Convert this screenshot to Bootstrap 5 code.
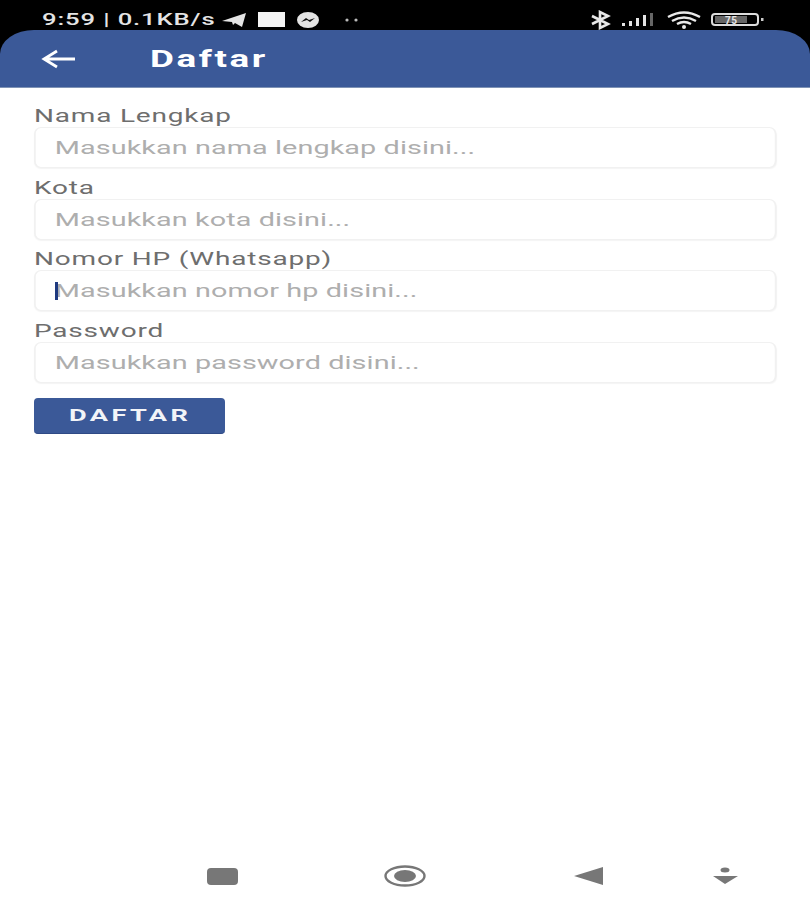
<!DOCTYPE html>
<html lang="id">
<head>
    <meta charset="UTF-8">
    <meta name="viewport" content="width=device-width, initial-scale=1.0">
    <title>Daftar</title>
    <link href="https://cdn.jsdelivr.net/npm/bootstrap@5.3.0/dist/css/bootstrap.min.css" rel="stylesheet">
    <style>
        body {
            background: #000;
            font-family: Roboto, "Liberation Sans", sans-serif;
            overflow: hidden;
        }

        .phone-screen {
            height: 900px;
            width: 810px;
        }

        /* the whole screenshot is stretched sideways, so the text is too */
        .wide-text {
            display: inline-block;
            transform: scaleX(1.6);
            transform-origin: left center;
        }

        .status-strip {
            height: 30px;
            padding: 9px 45px 0 42px;
            color: #e4e4e4;
            font-size: 16px;
            font-weight: 500;
            letter-spacing: 0.55px;
        }

        .status-time {
            width: 177px;
            white-space: nowrap;
        }

        .status-left svg, .status-right svg {
            display: block;
        }

        .app-header {
            height: 58px;
            background: #3b5998;
            border-radius: 34px 34px 0 0 / 24px 24px 0 0;
            border-bottom: 1px solid #7f93b5;
            padding-left: 41px;
            color: #fff;
        }

        .app-title {
            font-size: 23px;
            font-weight: 700;
            letter-spacing: 1.6px;
            margin-left: 74px;
            padding-top: 4px;
        }

        .form-area {
            background: #fff;
            padding: 16px 33px 0 34px;
        }

        .field-label {
            display: block;
            color: #6e6e6e;
            font-size: 17.5px;
            line-height: 22px;
            letter-spacing: 0.5px;
            padding-top: 1px;
            margin: 0;
        }

        .field-wrap {
            position: relative;
            margin-bottom: 7.67px;
        }

        .form-control.field-input {
            width: 62.5%;
            height: 41px;
            border: 1px solid #f1f1f1;
            border-width: 1px 0.625px;
            border-radius: 4.4px / 7px;
            padding: 0 12px;
            font-size: 18px;
            letter-spacing: 0.05px;
            box-shadow: 0 1px 1px #f4f4f4;
            transform: scaleX(1.6);
            transform-origin: left center;
        }

        .field-input::placeholder {
            color: #aeaeae;
            opacity: 1;
        }

        .text-cursor {
            position: absolute;
            left: 21px;
            top: 12px;
            width: 3px;
            height: 18px;
            background: #1f3a80;
        }

        .btn.submit-btn {
            display: block;
            width: 191px;
            height: 36px;
            margin-top: 15px;
            padding: 0 0 0 35px;
            text-align: left;
            background: #3b5998;
            border: 0;
            border-bottom: 1px solid #2f4a85;
            border-radius: 4px;
            color: #f2f4f8;
            font-size: 17px;
            font-weight: 700;
            letter-spacing: 2.1px;
        }

        .nav-strip {
            background: #fff;
        }

        .nav-strip svg {
            display: block;
        }
    </style>
</head>
<body>
    <div class="phone-screen d-flex flex-column">
        <!-- status bar -->
        <div class="status-strip d-flex align-items-center justify-content-between">
            <div class="status-left d-flex align-items-center">
                <div class="status-time"><span class="wide-text">9:59 | 0.1KB/s</span></div>
                <svg width="150" height="20" viewBox="0 0 150 20">
                    <path d="M3 11 L27 3 L23 17 L16 13 L14 15 L13 12 Z" fill="#e4e4e4"/>
                    <rect x="39" y="2" width="27" height="15" fill="#f4f4f4"/>
                    <ellipse cx="89" cy="10" rx="11" ry="8" fill="#e4e4e4"/>
                    <path d="M82 12 L87 8 L90 10 L96 8 L91 12 L88 10 Z" fill="#111"/>
                    <circle cx="128" cy="10" r="1.6" fill="#bbb"/>
                    <circle cx="137" cy="10" r="1.6" fill="#bbb"/>
                </svg>
            </div>
            <div class="status-right">
                <svg width="174" height="20" viewBox="0 0 174 20">
                    <path d="M1 6 L17 14 L9 18 L9 2 L17 6 L1 14" fill="none" stroke="#e8e8e8" stroke-width="2.6"/>
                    <rect x="31" y="13" width="3" height="3" fill="#e4e4e4"/>
                    <rect x="38" y="11" width="3" height="5" fill="#e4e4e4"/>
                    <rect x="45" y="8" width="3" height="8" fill="#e4e4e4"/>
                    <rect x="52" y="5" width="3" height="11" fill="#e4e4e4"/>
                    <rect x="59" y="3" width="3" height="13" fill="#666"/>
                    <path d="M77 7 Q93 -2 109 7 M81 11 Q93 4 105 11 M86 14 Q93 10 100 14" fill="none" stroke="#e8e8e8" stroke-width="2.4"/>
                    <circle cx="93" cy="17" r="2" fill="#e8e8e8"/>
                    <rect x="121" y="4" width="46" height="11" rx="3" fill="none" stroke="#ddd" stroke-width="2"/>
                    <rect x="124" y="6" width="32" height="7" fill="#666"/>
                    <text x="134" y="13.5" font-size="10" font-weight="700" fill="#e8e8e8" font-family="Roboto, sans-serif">75</text>
                    <rect x="170" y="8" width="2.5" height="3" fill="#ccc"/>
                </svg>
            </div>
        </div>

        <!-- app bar -->
        <div class="app-header d-flex align-items-center">
            <svg width="35" height="22" viewBox="0 0 35 22">
                <path d="M34 11 H3 M16 3 L3 11 L16 19" fill="none" stroke="#fff" stroke-width="2.8"/>
            </svg>
            <span class="app-title wide-text">Daftar</span>
        </div>

        <!-- register form -->
        <form class="form-area flex-grow-1">
            <label class="field-label" for="namaInput"><span class="wide-text">Nama Lengkap</span></label>
            <div class="field-wrap">
                <input type="text" class="form-control field-input" id="namaInput" placeholder="Masukkan nama lengkap disini...">
            </div>
            <label class="field-label" for="kotaInput"><span class="wide-text">Kota</span></label>
            <div class="field-wrap">
                <input type="text" class="form-control field-input" id="kotaInput" placeholder="Masukkan kota disini...">
            </div>
            <label class="field-label" for="hpInput"><span class="wide-text">Nomor HP (Whatsapp)</span></label>
            <div class="field-wrap">
                <input type="text" class="form-control field-input" id="hpInput" placeholder="Masukkan nomor hp disini...">
                <span class="text-cursor"></span>
            </div>
            <label class="field-label" for="passInput"><span class="wide-text">Password</span></label>
            <div class="field-wrap">
                <input type="password" class="form-control field-input" id="passInput" placeholder="Masukkan password disini...">
            </div>
            <button type="button" class="btn submit-btn"><span class="wide-text">DAFTAR</span></button>
        </form>

        <!-- android nav buttons -->
        <div class="nav-strip">
            <svg width="810" height="48" viewBox="0 0 810 48">
                <rect x="207" y="16" width="31" height="17" rx="4" fill="#777"/>
                <ellipse cx="405" cy="24" rx="19.5" ry="9.5" fill="none" stroke="#777" stroke-width="2.4"/>
                <ellipse cx="405" cy="24" rx="11" ry="6" fill="#777"/>
                <path d="M574 24 L603 15 L603 33 Z" fill="#777"/>
                <ellipse cx="725" cy="18" rx="4.5" ry="2.5" fill="#777"/>
                <path d="M713 24 L738 24 L725 32 Z" fill="#777"/>
            </svg>
        </div>
    </div>

    <script src="https://cdn.jsdelivr.net/npm/bootstrap@5.3.0/dist/js/bootstrap.bundle.min.js"></script>
</body>
</html>
